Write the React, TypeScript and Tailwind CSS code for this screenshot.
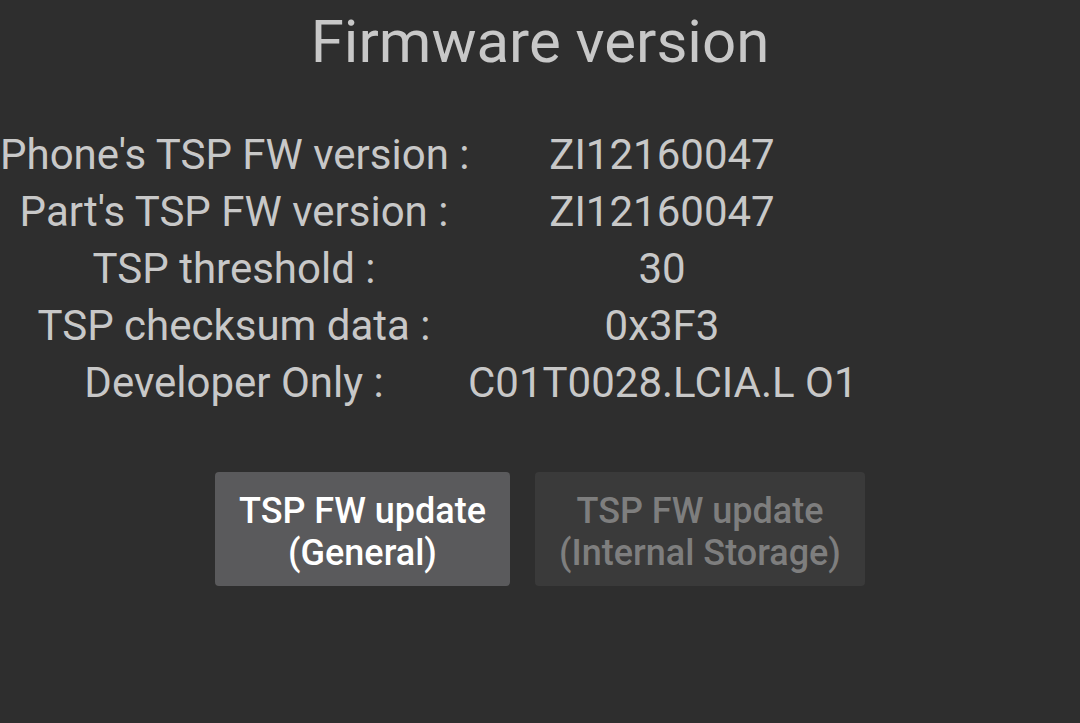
import React from "react";

const rows: [string, string][] = [
  ["Phone's TSP FW version :", "ZI12160047"],
  ["Part's TSP FW version :", "ZI12160047"],
  ["TSP threshold :", "30"],
  ["TSP checksum data :", "0x3F3"],
  ["Developer Only :", "C01T0028.LCIA.L O1"],
];

export default function App() {
  return (
    <div
      className="w-[1080px] h-[723px] bg-[#2e2e2e] text-[#c8c8c8] overflow-hidden flex flex-col"
      style={{ fontFamily: "Roboto, 'Noto Sans', sans-serif" }}
    >
      <div className="pt-[7px] text-center text-[60px] leading-[70px]">Firmware version</div>

      <div className="mt-[49px] grid grid-cols-[468px_388px] text-[42px] leading-[57px]">
        {rows.map(([label, value]) => (
          <React.Fragment key={label}>
            <div className="text-center whitespace-nowrap">{label}</div>
            <div className="text-center whitespace-nowrap">{value}</div>
          </React.Fragment>
        ))}
      </div>

      <div className="mt-[61px] flex justify-center gap-[25px]">
        <button className="w-[295px] h-[114px] pt-[6px] rounded-[4px] bg-[#5a5a5c] text-white text-[36px] leading-[42px] font-medium">
          TSP FW update
          <br />
          (General)
        </button>
        <button className="w-[330px] h-[114px] pt-[6px] rounded-[4px] bg-[#3a3a3a] text-[#7e7e7e] text-[36px] leading-[42px] font-medium">
          TSP FW update
          <br />
          (Internal Storage)
        </button>
      </div>
    </div>
  );
}
